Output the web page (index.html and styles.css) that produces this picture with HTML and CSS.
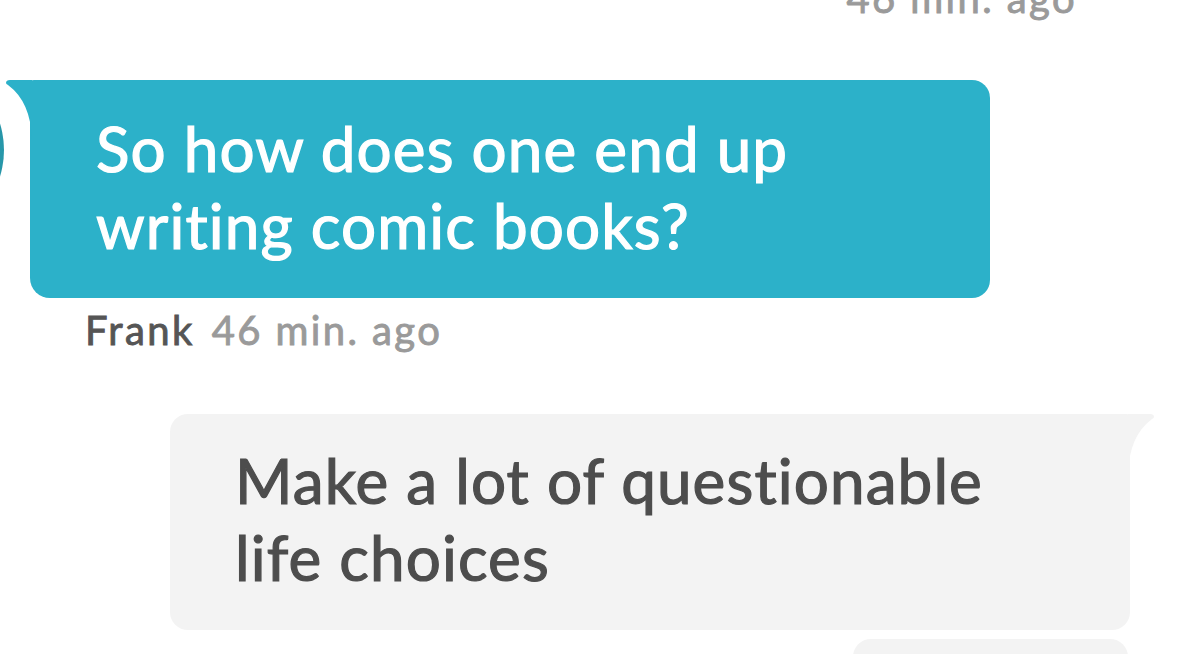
FILE: index.html
```html
<!DOCTYPE html>
<html>
<head>
<meta charset="utf-8">
<link rel="stylesheet" href="styles.css">
</head>
<body>
<div class="thread">
  <div class="stamp stamp-top">46 min. ago</div>
  <div class="msg msg-in">
    <div class="avatar"></div>
    <div class="bubble bubble-in">
      <svg class="tail tail-in" viewBox="0 0 26 60" width="26" height="60"><path d="M0 3 Q0 0 4 0 L26 0 L26 60 Q25 22 2 5 Q0 4 0 3 Z"/></svg>
      So how does one end up<br>writing comic books?
    </div>
  </div>
  <div class="meta"><span class="name">Frank</span><span class="time">46 min. ago</span></div>
  <div class="msg msg-out">
    <div class="bubble bubble-out">
      <svg class="tail tail-out" viewBox="0 0 26 60" width="26" height="60"><path d="M26 3 Q26 0 22 0 L0 0 L0 60 Q1 22 24 5 Q26 4 26 3 Z"/></svg>
      Make a lot of questionable<br>life choices
    </div>
  </div>
  <div class="msg msg-out">
    <div class="bubble bubble-out bubble-next"></div>
  </div>
</div>
</body>
</html>
```

FILE: styles.css
```css
* { box-sizing: border-box; }
html, body { margin: 0; padding: 0; background: #ffffff; }
body {
  width: 1200px;
  height: 654px;
  overflow: hidden;
  font-family: Lato, "Noto Sans", sans-serif;
  font-variant-ligatures: none;
}
.thread {
  display: flex;
  flex-direction: column;
}
.stamp {
  font-size: 40px;
  line-height: 40px;
  letter-spacing: 2.4px;
  font-weight: 400;
  -webkit-text-stroke: 0.9px currentColor;
  color: #9a9a9a;
}
.stamp-top {
  text-align: right;
  padding-right: 123px;
  margin-top: -22px;
  height: 40px;
  flex: none;
}
.msg {
  position: relative;
  display: flex;
  flex: none;
}
.msg-in {
  margin-top: 62px;
  padding-left: 30px;
}
.msg-out {
  justify-content: flex-end;
  padding-right: 70px;
}
.avatar {
  position: absolute;
  left: -176px;
  top: -20px;
  width: 180px;
  height: 180px;
  border-radius: 50%;
  background: radial-gradient(circle at 85% 50%, #2a9fb2 0, #1e7f90 60%);
}
.bubble {
  position: relative;
  font-size: 62px;
  line-height: 77px;
  letter-spacing: 1.1px;
  font-weight: 400;
  -webkit-text-stroke: 1.2px currentColor;
}
.bubble-in {
  width: 960px;
  height: 218px;
  padding: 30px 20px 0 66px;
  background: #2cb1c9;
  color: #ffffff;
  border-radius: 4px 18px 18px 20px;
}
.tail { position: absolute; top: 0; }
.tail-in { left: -24px; fill: #2cb1c9; }
.tail-out { right: -24px; fill: #f3f3f3; }
.meta {
  margin-top: 10px;
  padding-left: 85px;
  font-size: 40px;
  line-height: 44px;
  letter-spacing: 2.4px;
  font-weight: 400;
  -webkit-text-stroke: 0.9px currentColor;
  display: flex;
  gap: 17px;
  flex: none;
}
.name { color: #555555; }
.time { color: #9a9a9a; }
.msg-out:not(:last-child) { margin-top: 62px; }
.bubble-out {
  width: 960px;
  height: 216px;
  padding: 28px 20px 0 65px;
  background: #f3f3f3;
  color: #4d4d4d;
  border-radius: 18px 4px 18px 18px;
}
.bubble-next {
  margin-top: 9px;
  margin-right: 2px;
  width: 275px;
  height: 80px;
  border-radius: 18px;
}
```
